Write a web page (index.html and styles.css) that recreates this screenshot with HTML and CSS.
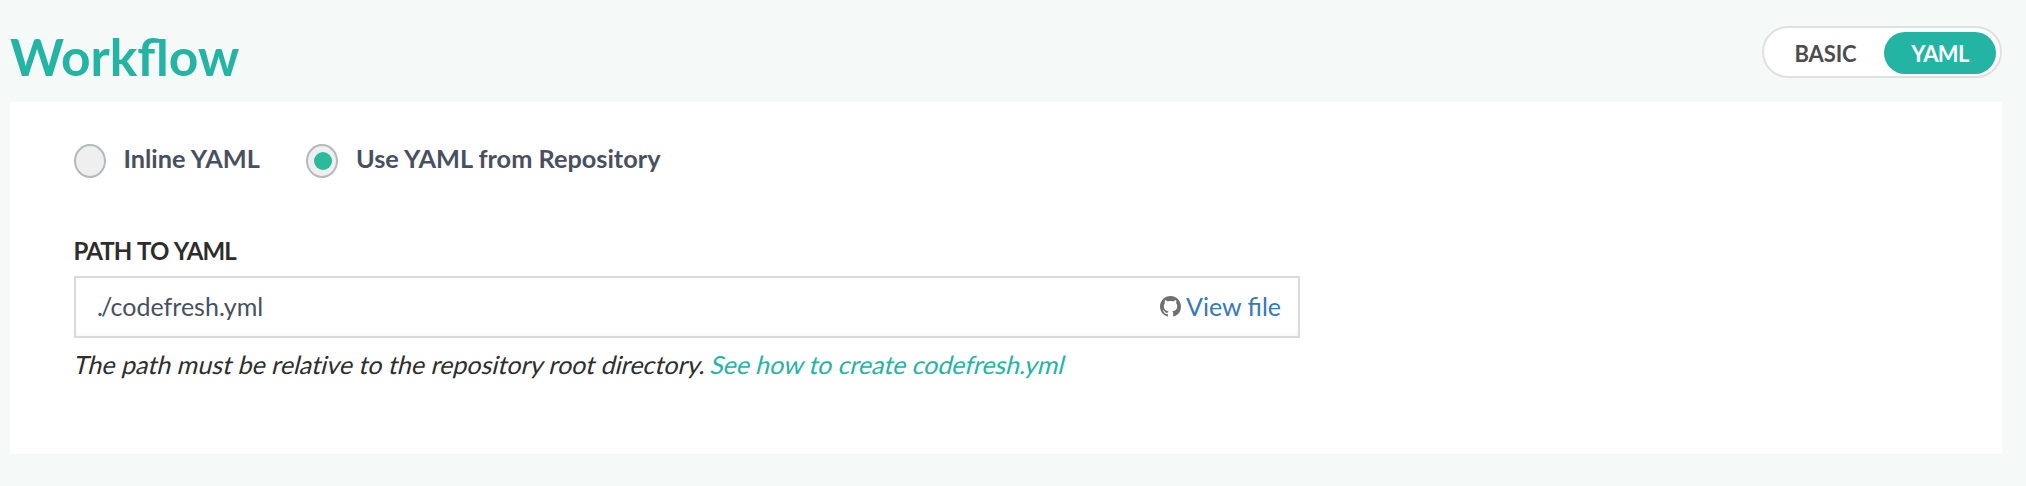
FILE: index.html
```html
<!DOCTYPE html>
<html lang="en">
<head>
<meta charset="utf-8">
<title>Workflow</title>
<link rel="stylesheet" href="styles.css">
</head>
<body>
<header class="header">
  <h1 class="title">Workflow</h1>
  <div class="toggle">
    <span class="toggle-item">BASIC</span>
    <span class="toggle-item active">YAML</span>
  </div>
</header>
<main class="panel">
  <div class="radios">
    <label class="radio"><span class="radio-mark"></span><span class="radio-text">Inline YAML</span></label>
    <label class="radio"><span class="radio-mark checked"></span><span class="radio-text">Use YAML from Repository</span></label>
  </div>
  <div class="field-label"><span>PATH TO YAML</span></div>
  <div class="field">
    <span class="field-value"><span class="dot-slash">./</span>codefresh.yml</span>
    <a class="view-file">
      <svg class="github" viewBox="0 0 16 16"><path d="M8 0C3.58 0 0 3.58 0 8c0 3.54 2.29 6.53 5.47 7.59.4.07.55-.17.55-.38 0-.19-.01-.82-.01-1.49-2.01.37-2.53-.49-2.69-.94-.09-.23-.48-.94-.82-1.13-.28-.15-.68-.52-.01-.53.63-.01 1.08.58 1.23.82.72 1.21 1.87.87 2.33.66.07-.52.28-.87.51-1.07-1.78-.2-3.64-.89-3.64-3.95 0-.87.31-1.59.82-2.15-.08-.2-.36-1.02.08-2.12 0 0 .67-.21 2.2.82.64-.18 1.32-.27 2-.27s1.36.09 2 .27c1.53-1.04 2.2-.82 2.2-.82.44 1.1.16 1.92.08 2.12.51.56.82 1.27.82 2.15 0 3.07-1.87 3.75-3.65 3.95.29.25.54.73.54 1.48 0 1.07-.01 1.93-.01 2.2 0 .21.15.46.55.38A8.01 8.01 0 0 0 16 8c0-4.42-3.58-8-8-8z"/></svg>
      <span>View file</span>
    </a>
  </div>
  <p class="hint">The path must be relative to the repository root directory. <a class="hint-link">See how to create codefresh.yml</a></p>
</main>
</body>
</html>
```
FILE: styles.css
```css
* { box-sizing: border-box; }
body {
  margin: 0;
  height: 486px;
  background: #f5f9f8;
  font-family: Lato, sans-serif;
  font-size: 25px;
  color: #2d2d2d;
  white-space: nowrap;
}
.header {
  height: 102px;
  padding: 26px 24px 0 10px;
  display: flex;
  align-items: flex-start;
  justify-content: space-between;
}
.title {
  margin: 0;
  line-height: 61px;
  font-size: 51.5px;
  font-weight: 700;
  color: #24b4a4;
}
.toggle {
  width: 240px;
  height: 52px;
  padding: 4px;
  display: flex;
  justify-content: space-between;
  background: #fff;
  border: 2px solid #e0e0e0;
  border-radius: 26px;
}
.toggle-item {
  width: 112px;
  height: 42px;
  line-height: 44px;
  padding-left: 3px;
  border-radius: 21px;
  text-align: center;
  font-size: 22px;
  font-weight: 700;
  letter-spacing: -0.1px;
  color: #4d4d4d;
}
.active {
  padding-left: 0;
  background: #24b4a4;
  letter-spacing: -0.6px;
  color: #fff;
}
.panel {
  width: 1992px;
  height: 352px;
  margin-left: 10px;
  padding: 42px 64px 0;
  background: #fff;
}
.radios { display: flex; gap: 46px; height: 34px; }
.radio { display: flex; gap: 17.5px; min-width: 186px; }
.radio-mark {
  width: 32px;
  height: 34px;
  padding: 6px 0 0 6px;
  border: 2px solid #b1babd;
  border-radius: 50%;
  background: #efefef;
}
.checked::before {
  content: "";
  display: block;
  width: 18px;
  height: 18px;
  border-radius: 50%;
  background: #2bba9c;
}
.checked + .radio-text { padding-left: 0.5px; }
.radio-text {
  line-height: 29px;
  font-size: 25.3px;
  font-weight: 700;
  color: #485060;
}
.field-label {
  margin-top: 56px;
  height: 42px;
  line-height: 34px;
  font-size: 24px;
  font-weight: 700;
  letter-spacing: -0.9px;
  word-spacing: 1.4px;
}
.field-label span { margin-left: -0.5px; }
.field {
  width: 1226px;
  height: 62px;
  padding: 0 17px 2px 21px;
  display: flex;
  align-items: center;
  justify-content: space-between;
  border: 2px solid #d9dadb;
  box-shadow: inset 0 -2px 4px #f4f8f7;
  color: #485060;
}
.dot-slash { letter-spacing: -1.8px; }
.view-file { display: flex; align-items: center; gap: 5px; color: #337ab7; }
.github { width: 21px; height: 21px; fill: #707070; }
.hint {
  margin: 9px 0 0 1px;
  line-height: 34px;
  letter-spacing: 0.02px;
  transform: skewX(-14deg);
}
.hint-link {
  margin-left: -1.8px;
  letter-spacing: -0.08px;
  color: #24b4a4;
}
```
